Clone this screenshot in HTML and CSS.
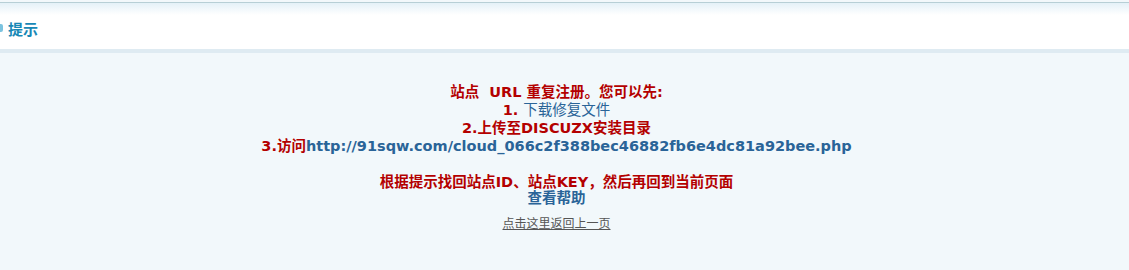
FILE: index.html
```html
<!DOCTYPE html>
<html>
<head>
<meta charset="utf-8">
<link rel="stylesheet" href="styles.css">
</head>
<body>
<div class="page">
  <div class="head">
    <span class="head-icon"></span><span class="head-title">提示</span>
  </div>
  <div class="band"></div>
  <div class="main">
    <div class="msg">
      <p class="red">站点&nbsp; URL 重复注册。您可以先:</p>
      <p class="red">1. <a class="blue plain" href="#">下载修复文件</a></p>
      <p class="red">2.上传至DISCUZX安装目录</p>
      <p class="red">3.访问<a class="blue" href="#">http://91sqw.com/cloud_066c2f388bec46882fb6e4dc81a92bee.php</a></p>
      <p class="blank">&nbsp;</p>
      <p class="red">根据提示找回站点ID、站点KEY，然后再回到当前页面</p>
      <p class="help"><a class="blue" href="#">查看帮助</a></p>
    </div>
    <p class="back"><a href="#">点击这里返回上一页</a></p>
  </div>
</div>
</body>
</html>
```
FILE: styles.css
```css
html, body {
  margin: 0;
  padding: 0;
}
body {
  background: #f2f8fb;
  font-family: "DejaVu Sans", "Noto Sans CJK SC", sans-serif;
  overflow: hidden;
}
.page {
  padding-top: 2px;
}
.head {
  border-top: 1px solid #b7cfd6;
  background: linear-gradient(#e4f1f8, #ffffff 12px);
  height: 47px;
  display: flex;
  align-items: center;
  padding-top: 3px;
  box-sizing: border-box;
}
.head-icon {
  display: inline-block;
  width: 8px;
  height: 8px;
  margin-left: -5px;
  margin-right: 5px;
  background: #7cc3df;
  border-radius: 2px;
}
.head-title {
  font-family: "Noto Sans CJK SC", sans-serif;
  font-weight: bold;
  font-size: 15px;
  color: #1888b6;
  margin-top: 2px;
}
.band {
  height: 4px;
  background: #dfebf2;
}
.main {
  padding: 30px 16px 0 0;
  text-align: center;
}
.msg p {
  margin: 0;
  line-height: 18px;
  font-size: 14.5px;
  font-weight: bold;
}
.msg .help {
  margin-top: -2px;
}
.red {
  color: #b40000;
}
.blue {
  color: #2a6498;
  text-decoration: none;
}
.plain {
  font-weight: normal;
}
.back {
  margin: 8px 0 0;
  font-size: 12px;
  line-height: 16px;
  font-family: "Noto Sans CJK SC", sans-serif;
}
.back a {
  color: #555;
  text-decoration: underline;
}
```
